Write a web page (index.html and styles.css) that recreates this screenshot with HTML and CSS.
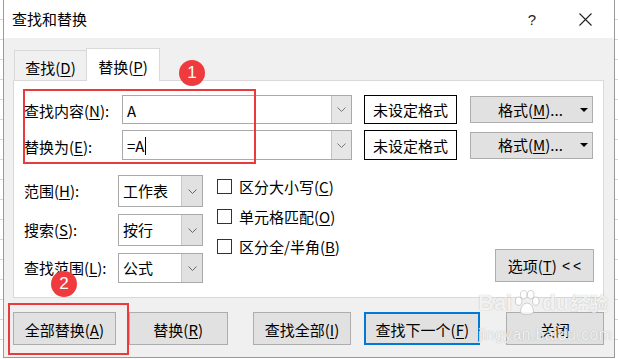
FILE: index.html
```html
<!DOCTYPE html>
<html lang="zh-CN">
<head>
<meta charset="utf-8">
<title>查找和替换</title>
<link rel="stylesheet" href="styles.css">
</head>
<body>
<div class="dialog">
  <div class="titlebar">
    <span class="title">查找和替换</span>
    <span class="help">?</span>
    <svg class="close" width="13" height="13" viewBox="0 0 13 13"><path d="M0.5 0.5 L12.5 12.5 M12.5 0.5 L0.5 12.5" stroke="#222" stroke-width="1.1" fill="none"/></svg>
  </div>
  <div class="body">
    <div class="tabs">
      <div class="tab">查找(<u>D</u>)</div>
      <div class="tab active">替换(<u>P</u>)</div>
    </div>
    <div class="panel">
      <div class="row">
        <span class="lbl">查找内容(<u>N</u>):</span>
        <div class="combo"><span class="val">A</span><span class="drop"><svg width="9" height="5" viewBox="0 0 9 5"><path d="M0.5 0.5 L4.5 4.5 L8.5 0.5" stroke="#777" fill="none"/></svg></span></div>
        <div class="fmtbox">未设定格式</div>
        <div class="btn fmt"><span>格式(<u>M</u>)...</span><span class="tri"></span></div>
      </div>
      <div class="row row2">
        <span class="lbl">替换为(<u>E</u>):</span>
        <div class="combo"><span class="val">=A<span class="caret"></span></span><span class="drop"><svg width="9" height="5" viewBox="0 0 9 5"><path d="M0.5 0.5 L4.5 4.5 L8.5 0.5" stroke="#777" fill="none"/></svg></span></div>
        <div class="fmtbox">未设定格式</div>
        <div class="btn fmt"><span>格式(<u>M</u>)...</span><span class="tri"></span></div>
      </div>
      <div class="options">
        <div class="grid">
          <span class="lbl">范围(<u>H</u>):</span>
          <div class="select"><span class="val">工作表</span><span class="drop"><svg width="9" height="5" viewBox="0 0 9 5"><path d="M0.5 0.5 L4.5 4.5 L8.5 0.5" stroke="#666" fill="none"/></svg></span></div>
          <span class="lbl">搜索(<u>S</u>):</span>
          <div class="select"><span class="val">按行</span><span class="drop"><svg width="9" height="5" viewBox="0 0 9 5"><path d="M0.5 0.5 L4.5 4.5 L8.5 0.5" stroke="#666" fill="none"/></svg></span></div>
          <span class="lbl">查找范围(<u>L</u>):</span>
          <div class="select"><span class="val">公式</span><span class="drop"><svg width="9" height="5" viewBox="0 0 9 5"><path d="M0.5 0.5 L4.5 4.5 L8.5 0.5" stroke="#666" fill="none"/></svg></span></div>
        </div>
        <div class="checks">
          <div class="chk"><span class="box"></span><span>区分大小写(<u>C</u>)</span></div>
          <div class="chk"><span class="box"></span><span>单元格匹配(<u>O</u>)</span></div>
          <div class="chk"><span class="box"></span><span>区分全/半角(<u>B</u>)</span></div>
        </div>
        <div class="btn optbtn">选项(<u>T</u>) <span class="lt">&lt;&lt;</span></div>
      </div>
    </div>
    <div class="actions">
      <div class="btn a1">全部替换(<u>A</u>)</div>
      <div class="btn a2">替换(<u>R</u>)</div>
      <div class="btn a3">查找全部(<u>I</u>)</div>
      <div class="btn a4">查找下一个(<u>F</u>)</div>
      <div class="btn a5">关闭</div>
    </div>
  </div>

  <div class="mark mark1"></div>
  <div class="mark mark2"></div>
  <div class="badge badge1">1</div>
  <div class="badge badge2">2</div>
  <div class="watermark">
    <div class="wm-top"><span>Bai</span><svg class="paw" width="28" height="26" viewBox="0 0 30 28"><g fill="rgba(255,255,255,0.85)" stroke="rgba(150,150,150,0.45)" stroke-width="1"><ellipse cx="6" cy="12" rx="3.5" ry="4.5"/><ellipse cx="11.5" cy="5" rx="3.5" ry="4.5"/><ellipse cx="19" cy="5" rx="3.5" ry="4.5"/><ellipse cx="24.5" cy="12" rx="3.5" ry="4.5"/><path d="M8 24 C8 17 12 14 15 14 C18 14 22 17 22 24 C22 27 8 27 8 24 Z"/></g></svg><span>du</span><span class="wm-cn">经验</span></div>
    <div class="wm-url">jingyan.baidu.com</div>
  </div>
</div>
</body>
</html>
```

FILE: styles.css
```css
* { box-sizing: border-box; }

html, body {
  margin: 0;
  padding: 0;
  width: 618px;
  height: 359px;
  overflow: hidden;
}

body {
  background-color: #ffffff;
  background-image: repeating-linear-gradient(to bottom, transparent 0, transparent 19px, #d6d6d6 19px, #d6d6d6 20px);
  font-family: "Noto Sans CJK SC", "Noto Sans", sans-serif;
  font-size: 15px;
  color: #000;
}

u { text-underline-offset: 2px; text-decoration-thickness: 1px; }

.dialog {
  position: relative;
  margin-left: 3px;
  width: 612px;
  height: 358px;
  background: #f0f0f0;
  border-left: 1px solid #9a9a9a;
  border-right: 1px solid #9a9a9a;
  border-bottom: 1px solid #9a9a9a;
}

.titlebar {
  height: 38px;
  background: #fff;
  display: flex;
  align-items: center;
  padding-left: 8px;
  padding-right: 22px;
}
.title { flex: 1; font-size: 15px; line-height: 20px; }
.help { font-family: "Liberation Sans", sans-serif; font-size: 15px; color: #222; margin-right: 43px; }
.close { display: block; }

.body { padding: 0 10px 0 9px; }

.tabs {
  height: 42px;
  display: flex;
  align-items: flex-end;
}
.tab {
  width: 72px;
  height: 30px;
  margin-left: 1px;
  border: 1px solid #d9d9d9;
  border-bottom: none;
  border-right: none;
  display: flex;
  justify-content: center;
  align-items: center;
  padding-top: 4px;
  line-height: 20px;
}
.tab.active {
  margin-left: 0;
  width: 74px;
  height: 33px;
  margin-bottom: -1px;
  background: #fff;
  border-right: 1px solid #d9d9d9;
  position: relative;
  z-index: 1;
}

.panel {
  height: 218px;
  background: #fff;
  border: 1px solid #d9d9d9;
  padding: 14px 9px 0 10px;
}

.row {
  display: flex;
  align-items: center;
  height: 29px;
}
.row2 { margin-top: 6px; height: 30px; }

.lbl { line-height: 20px; white-space: nowrap; }
.row .lbl { width: 98px; padding-top: 3px; }

.combo, .select {
  height: 100%;
  border: 1px solid #a9a9a9;
  background: #fff;
  display: flex;
  align-items: stretch;
}
.combo { width: 230px; }
.val {
  flex: 1;
  display: flex;
  align-items: center;
  padding-left: 4px;
  line-height: 20px;
}
.combo .val { padding-top: 2px; }
.caret {
  display: inline-block;
  width: 1px;
  height: 18px;
  background: #000;
  margin-left: 1px;
}
.drop {
  width: 20px;
  background: #e6e6e6;
  border-left: 1px solid #c4c4c4;
  display: flex;
  align-items: center;
  justify-content: center;
}
.drop svg { display: block; }

.fmtbox {
  margin-left: 12px;
  width: 93px;
  height: 100%;
  border: 1px solid #000;
  background: #fff;
  display: flex;
  align-items: center;
  justify-content: center;
  padding-top: 1px;
  line-height: 20px;
}

.btn {
  background: #e1e1e1;
  border: 1px solid #adadad;
  display: flex;
  align-items: center;
  justify-content: center;
  line-height: 20px;
  white-space: nowrap;
}
.fmt {
  margin-left: 13px;
  width: 123px;
  height: 27px;
  justify-content: flex-start;
  padding-left: 27px;
  padding-right: 4px;
}
.tri {
  margin-left: auto;
  width: 0;
  height: 0;
  border-left: 4px solid transparent;
  border-right: 4px solid transparent;
  border-top: 4px solid #000;
}

.options {
  margin-top: 15px;
  display: flex;
  height: 108px;
}
.grid {
  display: grid;
  grid-template-columns: 94px 85px;
  grid-template-rows: 32px 32px 30px;
  row-gap: 7px;
  align-items: center;
}
.select { width: 85px; }
.select .drop { width: 21px; background: #e1e1e1; border-left: 1px solid #c8c8c8; }

.checks {
  margin-left: 14px;
  padding-top: 4px;
  display: flex;
  flex-direction: column;
  gap: 15px;
}
.chk {
  height: 15px;
  display: flex;
  align-items: center;
  white-space: nowrap;
  line-height: 20px;
}
.box {
  width: 15px;
  height: 15px;
  border: 1px solid #333;
  background: #fff;
  margin-right: 7px;
  flex: none;
}

.optbtn {
  margin-left: auto;
  align-self: flex-end;
  width: 99px;
  height: 33px;
  margin-bottom: 1px;
}
.lt { letter-spacing: 3px; margin-left: 5px; margin-right: -3px; font-family: "Liberation Sans", sans-serif; font-size: 14px; }

.actions {
  margin-top: 14px;
  display: flex;
}
.actions .btn { height: 33px; padding-top: 2px; }
.a1 { width: 103px; }
.a2 { width: 99px; margin-left: 13px; }
.a3 { width: 99px; margin-left: 25px; }
.a4 { width: 116px; margin-left: 13px; border: 2px solid #0078d7; }
.a5 { width: 98px; margin-left: 26px; }

.mark {
  position: absolute;
  border: 2px solid #ec3a3c;
  z-index: 3;
}
.mark1 { left: 19px; top: 89px; width: 233px; height: 75px; }
.mark2 { left: 4px; top: 303px; width: 121px; height: 52px; }

.badge {
  position: absolute;
  width: 26px;
  height: 26px;
  border-radius: 50%;
  background: #ef3b3d;
  color: #fff;
  font-family: "Liberation Sans", sans-serif;
  font-size: 17px;
  display: flex;
  align-items: center;
  justify-content: center;
  z-index: 4;
}
.badge1 { left: 175px; top: 60px; }
.badge2 { left: 47px; top: 271px; }

.watermark {
  position: absolute;
  left: 474px;
  top: 289px;
  width: max-content;
  white-space: nowrap;
  z-index: 5;
  color: rgba(255, 255, 255, 0.85);
  text-shadow: 0 0 1px rgba(110, 110, 110, 0.55);
  font-family: "Liberation Sans", sans-serif;
  font-weight: bold;
  pointer-events: none;
}
.wm-top { display: flex; align-items: center; font-size: 22px; line-height: 28px; }
.paw { display: block; margin: 0 1px; }
.wm-cn { font-family: "Noto Sans CJK SC", sans-serif; font-size: 19px; margin-left: 1px; }
.wm-url { font-size: 16px; line-height: 18px; font-weight: normal; letter-spacing: 0.3px; margin-top: 9px; }
```
